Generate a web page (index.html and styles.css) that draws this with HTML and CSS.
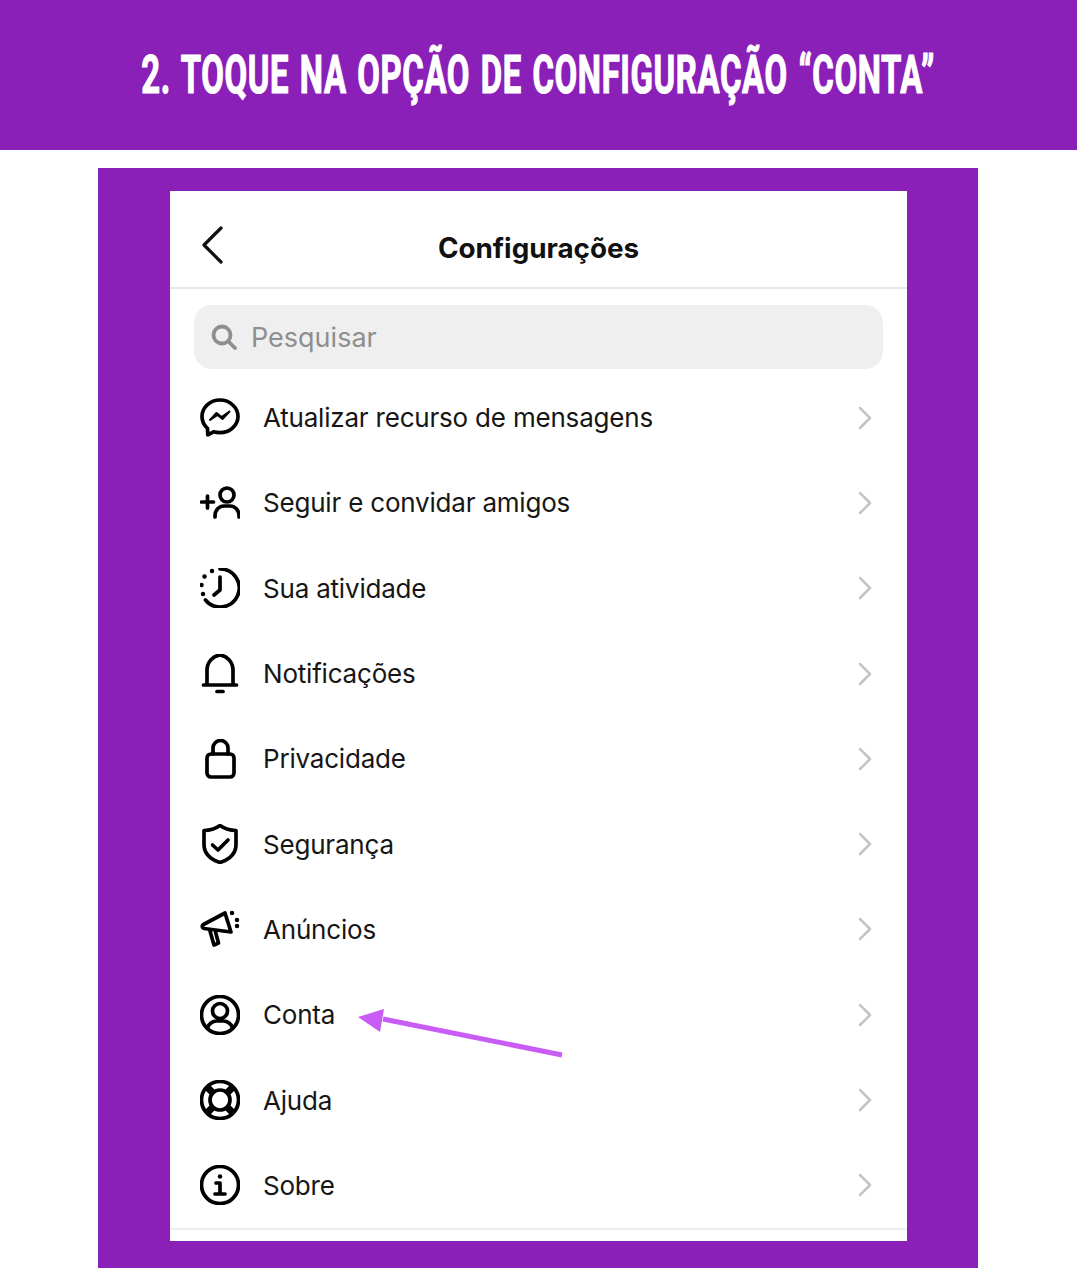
FILE: index.html
```html
<!DOCTYPE html>
<html lang="pt-BR">
<head>
    <meta charset="UTF-8">
    <meta name="viewport" content="width=device-width, initial-scale=1.0">
    <title>Configurações</title>
    <link rel="stylesheet" href="styles.css">
</head>
<body>
    <header class="banner">
        <h1 class="banner-title">2. TOQUE NA OPÇÃO DE CONFIGURAÇÃO “CONTA”</h1>
    </header>
    <main class="panel">
        <section class="phone">
            <div class="topbar">
                <svg class="back" viewBox="0 0 22 38"><path d="M20 2 3 19l17 17"/></svg>
                <strong class="topbar-title">Configurações</strong>
            </div>
            <div class="search">
                <svg class="search-icon" viewBox="0 0 26 26"><circle cx="11" cy="11" r="8.500"/><path d="m17.500 17.500 6.500 6.500"/></svg>
                <span>Pesquisar</span>
            </div>
            <ul class="menu">
                <li class="row">
                    <svg class="icon" viewBox="0 0 40 40"><path d="M20 2C10 2 2 9.500 2 18.500c0 4.700 2 8.800 5.500 11.800l.3 6.500 5.700-3c2 .6 4.200.9 6.500.9 10 0 18-7.500 18-16.200S30 2 20 2z"/><path class="solid" d="m10 22 6.500-7 5 4 8-5.500-7 7.500-5-4z"/></svg>
                    <span class="label">Atualizar recurso de mensagens</span>
                    <svg class="chevron" viewBox="0 0 14 24"><path d="m2 2 10 10L2 22"/></svg>
                </li>
                <li class="row">
                    <svg class="icon" viewBox="0 0 40 40"><path d="M1.500 19h12M7.500 13v12"/><circle cx="27" cy="12" r="7"/><path d="M15 34v-1c0-6 4-10 9-10h6c5 0 9 4 9 10v1"/></svg>
                    <span class="label">Seguir e convidar amigos</span>
                    <svg class="chevron" viewBox="0 0 14 24"><path d="m2 2 10 10L2 22"/></svg>
                </li>
                <li class="row">
                    <svg class="icon" viewBox="0 0 40 40"><path d="M20 1a19 19 0 1 1-14.500 31"/><path d="M20 9v13l-6 5"/><path class="dots" d="M12 3h.01M4.500 8.500h.01M1.500 17h.01M3 26h.01"/></svg>
                    <span class="label">Sua atividade</span>
                    <svg class="chevron" viewBox="0 0 14 24"><path d="m2 2 10 10L2 22"/></svg>
                </li>
                <li class="row">
                    <svg class="icon" viewBox="0 0 40 40"><path d="M3.500 31h33M7 31V16C7 8 13 2 20 1c7 1 13 7 13 15v15"/><path d="M17 37.500h6"/></svg>
                    <span class="label">Notificações</span>
                    <svg class="chevron" viewBox="0 0 14 24"><path d="m2 2 10 10L2 22"/></svg>
                </li>
                <li class="row">
                    <svg class="icon" viewBox="0 0 40 40"><rect x="7" y="15" width="27" height="23" rx="4"/><path d="M13 15V9a7.500 7.500 0 0 1 15 0v6"/></svg>
                    <span class="label">Privacidade</span>
                    <svg class="chevron" viewBox="0 0 14 24"><path d="m2 2 10 10L2 22"/></svg>
                </li>
                <li class="row">
                    <svg class="icon" viewBox="0 0 40 40"><path d="M20 1.500C15 5 9 6.500 4 6.500v14c0 9 7 15 16 18 9-3 16-9 16-18v-14c-5 0-11-1.500-16-5z"/><path d="m12.500 21 5.500 5 10-10"/></svg>
                    <span class="label">Segurança</span>
                    <svg class="chevron" viewBox="0 0 14 24"><path d="m2 2 10 10L2 22"/></svg>
                </li>
                <li class="row">
                    <svg class="icon" viewBox="0 0 40 40"><path d="M25 4 3.500 15.500c-2 1-1.500 3.500.5 4L31 23z"/><path d="m10 22 4 14 4.500-2-3-11"/><path class="dots" d="M32 4h.01M37 11h.01M37 17h.01"/></svg>
                    <span class="label">Anúncios</span>
                    <svg class="chevron" viewBox="0 0 14 24"><path d="m2 2 10 10L2 22"/></svg>
                </li>
                <li class="row">
                    <svg class="icon" viewBox="0 0 40 40"><circle cx="20" cy="20" r="18.500"/><circle cx="20" cy="16" r="7.500"/><path d="M7.500 33c1-4 5-7 9-7h7c4 0 8 3 9 7"/></svg>
                    <span class="label">Conta</span>
                    <svg class="chevron" viewBox="0 0 14 24"><path d="m2 2 10 10L2 22"/></svg>
                </li>
                <li class="row">
                    <svg class="icon" viewBox="0 0 40 40"><circle cx="20" cy="20" r="18.500"/><circle cx="20" cy="20" r="10"/><path class="thick" d="m7 7 6 6M33 7l-6 6M7 33l6-6M33 33l-6-6"/></svg>
                    <span class="label">Ajuda</span>
                    <svg class="chevron" viewBox="0 0 14 24"><path d="m2 2 10 10L2 22"/></svg>
                </li>
                <li class="row">
                    <svg class="icon" viewBox="0 0 40 40"><circle cx="20" cy="20" r="18.500"/><path d="M16 18h4v11M15 29h10"/><path class="dots" d="M20 11.500h.01"/></svg>
                    <span class="label">Sobre</span>
                    <svg class="chevron" viewBox="0 0 14 24"><path d="m2 2 10 10L2 22"/></svg>
                </li>
            </ul>
            <svg class="pointer" viewBox="0 0 230 70"><path class="pointer-shaft" d="M33 18 212 54"/><path class="pointer-head" d="M8 16 34 8 30 31z"/></svg>
        </section>
    </main>
</body>
</html>
```
FILE: styles.css
```css
* {
    box-sizing: border-box;
}
body {
    margin: 0;
    background-color: #fff;
    font-family: Inter, "Noto Sans", sans-serif;
    color: #111;
}
.banner {
    height: 150px;
    background-color: #8a20b8;
    display: flex;
    align-items: center;
    justify-content: center;
    overflow: hidden;
}
.banner-title {
    margin: 0;
    flex: none;
    font-family: Roboto, sans-serif;
    font-size: 53px;
    font-weight: 700;
    line-height: 1;
    letter-spacing: 1px;
    word-spacing: 3px;
    color: #fff;
    -webkit-text-stroke: 1.200px #fff;
    white-space: nowrap;
    transform: scaleX(0.62);
}
.panel {
    width: 880px;
    margin: 18px 0 12px 98px;
    padding: 23px 71px 27px 72px;
    background-color: #8a20b8;
}
.phone {
    position: relative;
    height: 1050px;
    background-color: #fff;
}
.topbar {
    position: relative;
    height: 98px;
    border-bottom: 2px solid #e8e8e8;
    display: flex;
    align-items: center;
    justify-content: center;
    padding-top: 17px;
}
.topbar-title {
    font-size: 27.800px;
    font-weight: 700;
    color: #111;
}
.back {
    position: absolute;
    left: 31px;
    top: 35px;
    width: 22px;
    height: 38px;
    fill: none;
    stroke: #111;
    stroke-width: 3.200;
    stroke-linecap: round;
    stroke-linejoin: round;
}
.search {
    height: 64px;
    margin: 16px 24px 6px;
    padding-left: 17px;
    display: flex;
    align-items: center;
    gap: 14px;
    background-color: #efefef;
    border-radius: 18px;
    font-size: 27px;
    color: #8e8e8e;
}
.search-icon {
    width: 26px;
    height: 26px;
    fill: none;
    stroke: #8e8e8e;
    stroke-width: 3.800;
    stroke-linecap: round;
}
.menu {
    list-style: none;
    margin: 0;
    padding: 0;
    border-bottom: 2px solid #eeeeee;
}
.row {
    height: 85.300px;
    padding: 0 35px 0 30px;
    display: flex;
    align-items: center;
    gap: 23px;
}
.icon {
    width: 40px;
    height: 40px;
    flex: none;
    fill: none;
    stroke: #000;
    stroke-width: 3.700;
    stroke-linecap: round;
    stroke-linejoin: round;
}
.icon .solid {
    fill: #000;
    stroke-width: 2;
}
.icon .dots {
    stroke-width: 4.500;
}
.icon .thick {
    stroke-width: 7;
    stroke-linecap: butt;
}
.label {
    flex: 1;
    font-size: 26px;
    letter-spacing: -0.200px;
    color: #161616;
}
.chevron {
    width: 14px;
    height: 24px;
    flex: none;
    fill: none;
    stroke: #c4c4c4;
    stroke-width: 2.500;
    stroke-linecap: round;
    stroke-linejoin: round;
}
.pointer {
    position: absolute;
    left: 180px;
    top: 810px;
    width: 230px;
    height: 70px;
}
.pointer-shaft {
    fill: none;
    stroke: #c95cf5;
    stroke-width: 5;
}
.pointer-head {
    fill: #c95cf5;
}
```
